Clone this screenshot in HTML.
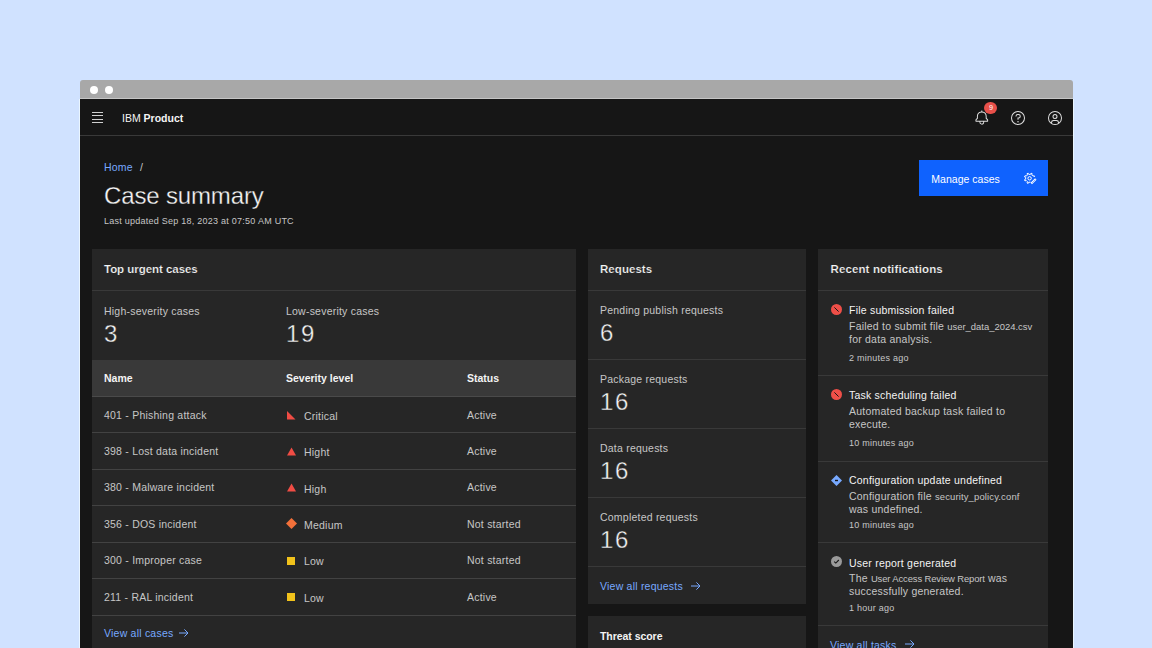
<!DOCTYPE html>
<html><head><meta charset="utf-8">
<style>
*{margin:0;padding:0;box-sizing:border-box}
html,body{width:1152px;height:648px;overflow:hidden;background:#d0e2ff;font-family:"Liberation Sans",sans-serif}
.a{position:absolute;white-space:nowrap;line-height:1}
#win{position:absolute;left:80px;top:99px;width:993px;height:549px;background:#161616;overflow:hidden;box-shadow:-1px 0 0 #eaf6ff,1px 0 0 #eaf6ff}
#bar{position:absolute;left:80px;top:79.5px;width:993px;height:19.5px;background:#a8a8a8;border-radius:3px 3px 0 0;border-bottom:1px solid #c6c6c6}
.dot{position:absolute;top:85.5px;width:8px;height:8px;border-radius:50%;background:#fff}
#hdr{position:absolute;left:80px;top:99px;width:993px;height:37px;background:#161616;border-bottom:1px solid #393939}
.card{position:absolute;background:#262626}
.div{position:absolute;height:1px;background:#393939}
.t1{color:#f4f4f4}
.t2{color:#c6c6c6}
.lnk{color:#78a9ff}
.b{font-weight:bold}
.s{font-size:10.5px;letter-spacing:0.22px}
.h{font-size:11.5px;font-weight:bold;letter-spacing:-0.04px;-webkit-text-stroke:0.2px #262626}
.tm{font-size:9px;letter-spacing:0.25px}
.num{font-size:24px;letter-spacing:1.6px;-webkit-text-stroke:0.35px #262626}
.cd{font-size:0.9em;letter-spacing:0}
</style></head><body>

<div id="win"></div>
<div id="bar"></div>
<div class="dot" style="left:90px"></div>
<div class="dot" style="left:105px"></div>
<div id="hdr"></div>
<svg class="a" style="left:92px;top:112px" width="12" height="11" viewBox="0 0 12 11"><g fill="#d0d0d0"><rect x="0" y="0" width="11" height="1"/><rect x="0" y="3" width="11" height="1"/><rect x="0" y="7" width="11" height="1"/><rect x="0" y="10" width="11" height="1"/></g></svg>

<div class="a t1" style="left:122px;top:112.91px;font-size:10.5px">IBM <b>Product</b></div>
<svg class="a" style="left:974.3px;top:109.9px" width="15.6" height="15.6" viewBox="0 0 32 32"><path fill="#e0e0e0" d="M28.7071,19.293,26,16.5859V13a10.0136,10.0136,0,0,0-9-9.9492V1H15V3.0508A10.0136,10.0136,0,0,0,6,13v3.5859L3.2929,19.293A1,1,0,0,0,3,20v3a1,1,0,0,0,1,1h7v.7768a5.152,5.152,0,0,0,4.5,5.1987A5.0057,5.0057,0,0,0,21,25V24h7a1,1,0,0,0,1-1V20A1,1,0,0,0,28.7071,19.293ZM19,25a3,3,0,0,1-6,0V24h6Zm8-3H5V20.4141L7.707,17.707A1,1,0,0,0,8,17V13a8,8,0,0,1,16,0v4a1,1,0,0,0,.293.707L27,20.4141Z"/></svg>
<div class="a" style="left:984.3px;top:102.3px;width:12.6px;height:12.2px;border-radius:50%;background:#e8504a"></div>
<div class="a" style="left:988.6px;top:103.9px;font-size:8px;color:#fff;line-height:1;transform:scaleX(0.9);transform-origin:left top">9</div>
<svg class="a" style="left:1010px;top:109.5px" width="16" height="16" viewBox="0 0 32 32"><path fill="#e0e0e0" d="M16,2A14,14,0,1,0,30,16,14,14,0,0,0,16,2Zm0,26A12,12,0,1,1,28,16,12,12,0,0,1,16,28Z"/><circle fill="#e0e0e0" cx="16" cy="23.5" r="1.5"/><path fill="#e0e0e0" d="M17,8H15.5A4.49,4.49,0,0,0,11,12.5V13h2v-.5A2.5,2.5,0,0,1,15.5,10H17a2.5,2.5,0,0,1,0,5H15v4.5h2V17a4.5,4.5,0,0,0,0-9Z"/></svg>
<svg class="a" style="left:1046.6px;top:109.5px" width="16" height="16" viewBox="0 0 32 32"><path fill="#e0e0e0" d="M16,8a5,5,0,1,0,5,5A5,5,0,0,0,16,8Zm0,8a3,3,0,1,1,3-3A3.0034,3.0034,0,0,1,16,16Z"/><path fill="#e0e0e0" d="M16,2A14,14,0,1,0,30,16,14.0158,14.0158,0,0,0,16,2ZM10,26.3765V25a3.0033,3.0033,0,0,1,3-3h6a3.0033,3.0033,0,0,1,3,3v1.3765a11.8989,11.8989,0,0,1-12,0Zm13.9925-1.4507A5.0016,5.0016,0,0,0,19,20H13a5.0016,5.0016,0,0,0-4.9925,4.9258,12,12,0,1,1,15.985,0Z"/></svg>

<div class="a lnk s" style="left:104px;top:162.41px">Home</div>
<div class="a t2 s" style="left:140px;top:162.41px">/</div>
<div class="a t1" style="left:104px;top:183.98px;font-size:24px;letter-spacing:-0.15px;-webkit-text-stroke:0.3px #161616">Case summary</div>
<div class="a t2 tm" style="left:104px;top:216.98px">Last updated Sep 18, 2023 at 07:50 AM UTC</div>
<div class="a" style="left:919px;top:160px;width:129px;height:36px;background:#0f62fe"></div>
<div class="a" style="left:931.3px;top:174.11px;font-size:10.5px;color:#fff;letter-spacing:0.02px">Manage cases</div>
<svg class="a" style="left:1024px;top:171.9px" width="13" height="13" viewBox="0 0 13 13"><path d="M6.47 10.21 L4.73 10.21 L4.18 11.41 L2.99 10.91 L3.45 9.67 L2.23 8.45 L0.99 8.91 L0.49 7.72 L1.69 7.17 L1.69 5.43 L0.49 4.88 L0.99 3.69 L2.23 4.15 L3.45 2.93 L2.99 1.69 L4.18 1.19 L4.73 2.39 L6.47 2.39 L7.02 1.19 L8.21 1.69 L7.75 2.93 L8.97 4.15 L10.21 3.69 L10.71 4.88" fill="none" stroke="#fff" stroke-width="1" stroke-linejoin="round"/><circle cx="5.6" cy="6.3" r="1.7" fill="none" stroke="#fff" stroke-width="1"/><path d="M7.3 11.5L11.8 7" stroke="#fff" stroke-width="2"/><path d="M8.1 10.9L11.3 7.7" stroke="#0f62fe" stroke-width="0.5"/></svg>
<div class="card" style="left:92px;top:249px;width:484px;height:400px"></div>
<div class="card" style="left:588px;top:249px;width:218px;height:355px"></div>
<div class="card" style="left:588px;top:616px;width:218px;height:40px"></div>
<div class="card" style="left:818px;top:249px;width:230px;height:400px"></div>
<div class="a t1 h" style="left:104px;top:264.47px">Top urgent cases</div>
<div class="div" style="left:92px;top:290px;width:484px"></div>
<div class="a t2 s" style="left:104px;top:306.11px">High-severity cases</div>
<div class="a t1 num" style="left:104px;top:321.58px">3</div>
<div class="a t2 s" style="left:286px;top:306.11px">Low-severity cases</div>
<div class="a t1 num" style="left:286px;top:321.58px">19</div>
<div class="a" style="left:92px;top:360px;width:484px;height:36px;background:#393939"></div>
<div class="div" style="left:92px;top:396px;width:484px;background:#4a4a4a"></div>
<div class="a t1 b" style="left:104px;top:373.41px;font-size:10.5px">Name</div>
<div class="a t1 b" style="left:286px;top:373.41px;font-size:10.5px">Severity level</div>
<div class="a t1 b" style="left:467px;top:373.41px;font-size:10.5px">Status</div>
<div class="a t2 s" style="left:104px;top:409.71px">401 - Phishing attack</div>
<div class="a t2 s" style="left:304px;top:410.91px">Critical</div>
<div class="a t2 s" style="left:467px;top:409.71px">Active</div>
<svg class="a" style="left:287px;top:411.0px" width="9" height="9" viewBox="0 0 9 9"><path d="M0 0V8.5H8.5Z" fill="#f04c44"/></svg>
<div class="div" style="left:92px;top:432.38px;width:484px;background:#424242"></div>
<div class="a t2 s" style="left:104px;top:446.09px">398 - Lost data incident</div>
<div class="a t2 s" style="left:304px;top:447.29px">Hight</div>
<div class="a t2 s" style="left:467px;top:446.09px">Active</div>
<svg class="a" style="left:287px;top:446.88px" width="9" height="9" viewBox="0 0 9 9"><path d="M4.5 0.5L9 8.5H0Z" fill="#f04c44"/></svg>
<div class="div" style="left:92px;top:468.75px;width:484px;background:#424242"></div>
<div class="a t2 s" style="left:104px;top:482.46px">380 - Malware incident</div>
<div class="a t2 s" style="left:304px;top:483.66px">High</div>
<div class="a t2 s" style="left:467px;top:482.46px">Active</div>
<svg class="a" style="left:287px;top:483.25px" width="9" height="9" viewBox="0 0 9 9"><path d="M4.5 0.5L9 8.5H0Z" fill="#f04c44"/></svg>
<div class="div" style="left:92px;top:505.12px;width:484px;background:#424242"></div>
<div class="a t2 s" style="left:104px;top:518.84px">356 - DOS incident</div>
<div class="a t2 s" style="left:304px;top:520.04px">Medium</div>
<div class="a t2 s" style="left:467px;top:518.84px">Not started</div>
<svg class="a" style="left:286px;top:518.12px" width="11" height="11" viewBox="0 0 11 11"><path d="M5.5 0L11 5.5L5.5 11L0 5.5Z" fill="#f2703a"/></svg>
<div class="div" style="left:92px;top:541.5px;width:484px;background:#424242"></div>
<div class="a t2 s" style="left:104px;top:555.21px">300 - Improper case</div>
<div class="a t2 s" style="left:304px;top:556.41px">Low</div>
<div class="a t2 s" style="left:467px;top:555.21px">Not started</div>
<svg class="a" style="left:287px;top:556.5px" width="8" height="8" viewBox="0 0 8 8"><rect width="8" height="8" fill="#f1c21b"/></svg>
<div class="div" style="left:92px;top:577.88px;width:484px;background:#424242"></div>
<div class="a t2 s" style="left:104px;top:591.59px">211 - RAL incident</div>
<div class="a t2 s" style="left:304px;top:592.79px">Low</div>
<div class="a t2 s" style="left:467px;top:591.59px">Active</div>
<svg class="a" style="left:287px;top:592.88px" width="8" height="8" viewBox="0 0 8 8"><rect width="8" height="8" fill="#f1c21b"/></svg>
<div class="div" style="left:92px;top:614.5px;width:484px;background:#424242"></div>
<div class="a lnk s" style="left:104px;top:627.91px">View all cases</div>
<svg class="a" style="left:177.4px;top:626.5px" width="12" height="12" viewBox="0 0 12 12"><path d="M2 6H10.6M7.4 2.4L11 6L7.4 9.6" fill="none" stroke="#78a9ff" stroke-width="1"/></svg>
<div class="a t1 h" style="left:600px;top:263.77px;letter-spacing:0.05px">Requests</div>
<div class="div" style="left:588px;top:290px;width:218px"></div>
<div class="a t2 s" style="left:600px;top:305.41px">Pending publish requests</div>
<div class="a t1 num" style="left:600px;top:321.08px">6</div>
<div class="div" style="left:588px;top:359px;width:218px"></div>
<div class="a t2 s" style="left:600px;top:374.41px">Package requests</div>
<div class="a t1 num" style="left:600px;top:390.08px">16</div>
<div class="div" style="left:588px;top:428px;width:218px"></div>
<div class="a t2 s" style="left:600px;top:443.41px">Data requests</div>
<div class="a t1 num" style="left:600px;top:459.08px">16</div>
<div class="div" style="left:588px;top:497px;width:218px"></div>
<div class="a t2 s" style="left:600px;top:512.41px">Completed requests</div>
<div class="a t1 num" style="left:600px;top:528.08px">16</div>
<div class="div" style="left:588px;top:566px;width:218px"></div>
<div class="a lnk s" style="left:600px;top:581.11px">View all requests</div>
<svg class="a" style="left:689.2px;top:579.5px" width="12" height="12" viewBox="0 0 12 12"><path d="M2 6H10.6M7.4 2.4L11 6L7.4 9.6" fill="none" stroke="#78a9ff" stroke-width="1"/></svg>
<div class="a t1 b" style="left:600px;top:631.11px;font-size:10.5px;letter-spacing:-0.05px">Threat score</div>
<div class="a t1 h" style="left:830.5px;top:263.77px;letter-spacing:0.12px">Recent notifications</div>
<div class="div" style="left:818px;top:290px;width:230px"></div>
<svg class="a" style="left:830.9px;top:304.3px" width="11" height="11" viewBox="0 0 11 11"><circle cx="5.5" cy="5.5" r="5.5" fill="#ef4f48"/><path d="M3.4 3.4L7.6 7.6" stroke="#161616" stroke-width="1"/></svg>
<div class="a t1 s" style="left:849px;top:305.11px">File submission failed</div>
<div class="a t2 s" style="left:849px;top:320.51px">Failed to submit file <span class="cd">user_data_2024.csv</span></div>
<div class="a t2 s" style="left:849px;top:334.11px">for data analysis.</div>
<div class="a t2 tm" style="left:849px;top:353.88px">2 minutes ago</div>
<div class="div" style="left:818px;top:375px;width:230px"></div>
<svg class="a" style="left:830.9px;top:389.3px" width="11" height="11" viewBox="0 0 11 11"><circle cx="5.5" cy="5.5" r="5.5" fill="#ef4f48"/><path d="M3.4 3.4L7.6 7.6" stroke="#161616" stroke-width="1"/></svg>
<div class="a t1 s" style="left:849px;top:390.11px">Task scheduling failed</div>
<div class="a t2 s" style="left:849px;top:405.51px">Automated backup task failed to</div>
<div class="a t2 s" style="left:849px;top:419.11px">execute.</div>
<div class="a t2 tm" style="left:849px;top:438.88px">10 minutes ago</div>
<div class="div" style="left:818px;top:461px;width:230px"></div>
<svg class="a" style="left:830.9px;top:475.3px" width="11" height="11" viewBox="0 0 11 11"><path d="M5.5 0L11 5.5L5.5 11L0 5.5Z" fill="#78a9ff"/><rect x="4" y="4.8" width="3" height="1.4" fill="#161616"/></svg>
<div class="a t1 s" style="left:849px;top:475.11px">Configuration update undefined</div>
<div class="a t2 s" style="left:849px;top:490.51px">Configuration file <span class="cd" style="letter-spacing:0.15px">security_policy.conf</span></div>
<div class="a t2 s" style="left:849px;top:504.11px">was undefined.</div>
<div class="a t2 tm" style="left:849px;top:520.88px">10 minutes ago</div>
<div class="div" style="left:818px;top:542px;width:230px"></div>
<svg class="a" style="left:830.9px;top:556.3px" width="11" height="11" viewBox="0 0 11 11"><circle cx="5.5" cy="5.5" r="5.5" fill="#9a9a9a"/><path d="M3.2 5.6L4.8 7.1L7.8 4" fill="none" stroke="#161616" stroke-width="1.1"/></svg>
<div class="a t1 s" style="left:849px;top:558.11px">User report generated</div>
<div class="a t2 s" style="left:849px;top:572.51px">The <span class="cd" style="letter-spacing:-0.12px">User Access Review Report</span> was</div>
<div class="a t2 s" style="left:849px;top:586.11px">successfully generated.</div>
<div class="a t2 tm" style="left:849px;top:603.68px">1 hour ago</div>
<div class="div" style="left:818px;top:625px;width:230px"></div>
<div class="a lnk s" style="left:830px;top:640.11px">View all tasks</div>
<svg class="a" style="left:903px;top:637.5px" width="12" height="12" viewBox="0 0 12 12"><path d="M2 6H10.6M7.4 2.4L11 6L7.4 9.6" fill="none" stroke="#78a9ff" stroke-width="1"/></svg>
</body></html>
